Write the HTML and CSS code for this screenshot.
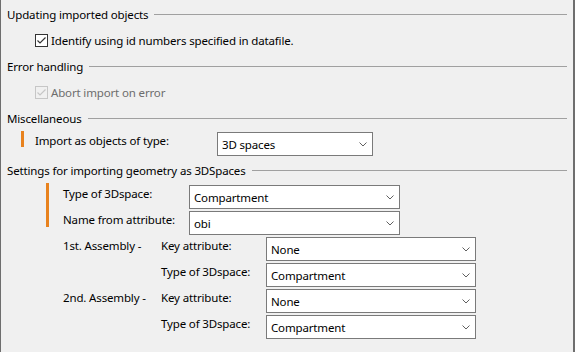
FILE: index.html
```html
<!DOCTYPE html>
<html lang="en">
<head>
    <meta charset="UTF-8">
    <title>Import settings</title>
    <link rel="stylesheet" href="styles.css">
</head>
<body>
    <div class="panel">
        <div class="group-title"><span>Updating imported objects</span><span class="rule"></span></div>
        <div class="check-row">
            <svg class="checkbox" width="13" height="13" viewBox="0 0 13 13"><rect x="0.5" y="0.5" width="12" height="12" fill="#fff" stroke="#333"/><polyline points="2.5,6.5 5,9 10.5,3.5" fill="none" stroke="#333" stroke-width="1.2"/></svg>
            <span>Identify using id numbers specified in datafile.</span>
        </div>

        <div class="group-title gap"><span>Error handling</span><span class="rule"></span></div>
        <div class="check-row disabled">
            <svg class="checkbox" width="13" height="13" viewBox="0 0 13 13"><rect x="0.5" y="0.5" width="12" height="12" fill="#f0f0f0" stroke="#c6c6c6"/><polyline points="2.5,6.5 5,9 10.5,3.5" fill="none" stroke="#c6c6c6" stroke-width="1.2"/></svg>
            <span>Abort import on error</span>
        </div>

        <div class="group-title gap"><span>Miscellaneous</span><span class="rule"></span></div>
        <div class="import-row">
            <span class="mark"></span>
            <span class="field-label import-label">Import as objects of type:</span>
            <div class="select w156"><span>3D spaces</span><svg class="chev" width="8" height="5" viewBox="0 0 8 5"><polyline points="0.5,0.5 4,4 7.5,0.5" fill="none" stroke="#606060"/></svg></div>
        </div>

        <div class="group-title gap-sm"><span>Settings for importing geometry as 3DSpaces</span><span class="rule"></span></div>
        <div class="settings-top">
            <span class="mark tall"></span>
            <div class="settings-grid">
                <span class="field-label">Type of 3Dspace:</span>
                <div class="select w211"><span>Compartment</span><svg class="chev" width="8" height="5" viewBox="0 0 8 5"><polyline points="0.5,0.5 4,4 7.5,0.5" fill="none" stroke="#606060"/></svg></div>
                <span class="field-label">Name from attribute:</span>
                <div class="select w211"><span>obi</span><svg class="chev" width="8" height="5" viewBox="0 0 8 5"><polyline points="0.5,0.5 4,4 7.5,0.5" fill="none" stroke="#606060"/></svg></div>
            </div>
        </div>

        <div class="assembly-grid">
            <span class="field-label">1st. Assembly -</span>
            <span class="field-label">Key attribute:</span>
            <div class="select w210"><span>None</span><svg class="chev" width="8" height="5" viewBox="0 0 8 5"><polyline points="0.5,0.5 4,4 7.5,0.5" fill="none" stroke="#606060"/></svg></div>
            <span></span>
            <span class="field-label">Type of 3Dspace:</span>
            <div class="select w210"><span>Compartment</span><svg class="chev" width="8" height="5" viewBox="0 0 8 5"><polyline points="0.5,0.5 4,4 7.5,0.5" fill="none" stroke="#606060"/></svg></div>

            <span class="field-label">2nd. Assembly -</span>
            <span class="field-label">Key attribute:</span>
            <div class="select w210"><span>None</span><svg class="chev" width="8" height="5" viewBox="0 0 8 5"><polyline points="0.5,0.5 4,4 7.5,0.5" fill="none" stroke="#606060"/></svg></div>
            <span></span>
            <span class="field-label">Type of 3Dspace:</span>
            <div class="select w210"><span>Compartment</span><svg class="chev" width="8" height="5" viewBox="0 0 8 5"><polyline points="0.5,0.5 4,4 7.5,0.5" fill="none" stroke="#606060"/></svg></div>
        </div>
    </div>
</body>
</html>
```

FILE: styles.css
```css
body {
    margin: 0;
    font-family: "Noto Sans", "DejaVu Sans", sans-serif;
    font-size: 11.5px;
    letter-spacing: -0.15px;
    color: #000;
    background-color: #f0f0f0;
}
.panel {
    box-sizing: border-box;
    width: 575px;
    height: 352px;
    padding: 7px 0 0 6px;
    border-left: 1px solid #6e6e6e;
    border-right: 2px solid #6e6e6e;
    background-color: #f0f0f0;
}
.group-title {
    display: flex;
    align-items: center;
    height: 16px;
    line-height: 16px;
    margin-right: 6px;
}
.group-title .rule {
    flex-grow: 1;
    height: 0;
    border-top: 1px solid #a0a0a0;
    margin-left: 6px;
    margin-top: -1px;
}
.group-title.gap {
    margin-top: 11px;
}
.group-title.gap-sm {
    margin-top: 7px;
}
.check-row {
    display: flex;
    align-items: center;
    height: 16px;
    margin-top: 9px;
    padding-left: 28px;
}
.checkbox {
    display: block;
    margin-right: 3px;
}
.disabled {
    color: #6d6d6d;
}
.mark {
    display: block;
    width: 3px;
    height: 16px;
    background-color: #e8821e;
}
.mark.tall {
    height: 44px;
    margin-top: -2px;
}
.import-row {
    display: flex;
    align-items: flex-start;
    margin-top: 5px;
    padding-left: 14px;
}
.import-row .mark {
    margin-top: -1px;
}
.field-label {
    line-height: 16px;
    padding-top: 1px;
    white-space: nowrap;
}
.import-label {
    width: 182px;
    margin-left: 11px;
}
.select {
    box-sizing: border-box;
    display: flex;
    align-items: center;
    justify-content: space-between;
    height: 24px;
    padding: 0 5px 0 4px;
    border: 1px solid #7a7a7a;
    background-color: #fff;
}
.chev {
    display: block;
}
.w156 { width: 156px; }
.w211 { width: 211px; }
.w210 { width: 210px; }
.settings-top {
    display: flex;
    align-items: flex-start;
    margin-top: 6px;
    padding-left: 39px;
}
.settings-grid {
    display: grid;
    grid-template-columns: 126px 211px;
    row-gap: 2px;
    margin-left: 14px;
}
.assembly-grid {
    display: grid;
    grid-template-columns: 98px 105px 210px;
    row-gap: 2px;
    margin-top: 2px;
    padding-left: 56px;
}
```
